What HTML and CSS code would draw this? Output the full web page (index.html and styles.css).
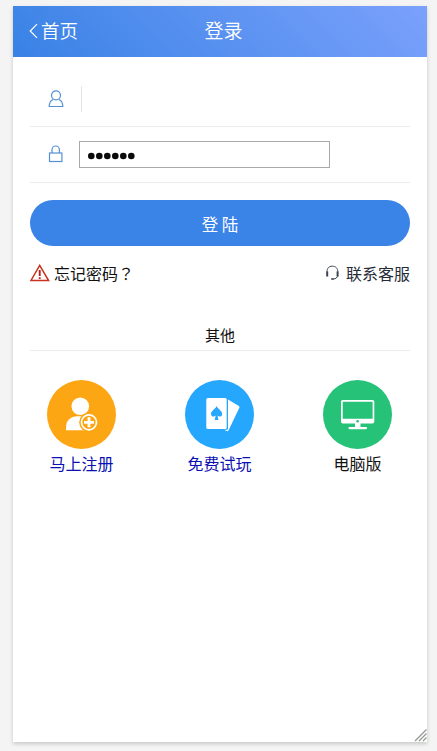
FILE: index.html
```html
<!DOCTYPE html>
<html lang="zh-CN">
<head>
<meta charset="utf-8">
<title>登录</title>
<link rel="stylesheet" href="styles.css">
</head>
<body>
<div class="panel">
  <header class="header">
    <a class="back"><svg width="9" height="16" viewBox="0 0 9 16"><path d="M8 1.2 1.2 8 8 14.8"/></svg>首页</a>
    <h1 class="title">登录</h1>
  </header>
  <form class="form">
    <div class="row">
      <svg class="field-icon" width="16" height="18" viewBox="0 0 16 18"><circle cx="8" cy="5.3" r="4.5"/><path d="M5 9.5C2.5 10.5 1.3 13 1.2 16.5h13.6C14.7 13 13.5 10.5 11 9.5"/></svg>
      <span class="divider"></span>
    </div>
    <div class="row">
      <svg class="field-icon lock" width="16" height="18" viewBox="0 0 16 18"><rect x="1.5" y="8" width="12.4" height="8.5"/><path d="M4 8V5a3.7 4 0 0 1 7.4 0v3"/></svg>
      <div class="password"><svg width="48" height="8" viewBox="0 0 48 8"><circle cx="3.3" cy="4" r="3.3"/><circle cx="11.3" cy="4" r="3.3"/><circle cx="19.3" cy="4" r="3.3"/><circle cx="27.3" cy="4" r="3.3"/><circle cx="35.3" cy="4" r="3.3"/><circle cx="43.3" cy="4" r="3.3"/></svg></div>
    </div>
    <div class="submit">登 陆</div>
  </form>
  <div class="links">
    <a class="forgot"><svg width="20" height="18" viewBox="0 0 20 18"><path d="M9.7 1.4 1 16.5h17.6Z" fill="none" stroke="#c8321e" stroke-width="1.5"/><path d="M9.7 6v6M9.7 13.3v1.7" stroke="#b82018" stroke-width="1.9"/></svg><span>忘记密码<span class="mark" lang="zh-TW">？</span></span></a>
    <a class="service"><svg width="15" height="16" viewBox="0 0 15 16" fill="none" stroke="#3b4351"><path d="M2 7C2 3 4 1.2 7.3 1.2S12.8 3 12.8 7M12.8 10c-.4 2.6-1.7 4-4.8 4"/><path d="M2.2 6.5v5M12.6 6.5v5" stroke-width="2"/><path d="M6.2 14h2.4" stroke-width="1.6"/></svg>联系客服</a>
  </div>
  <h2 class="other">其他</h2>
  <nav class="options">
    <a class="option link">
      <svg width="69" height="69" viewBox="0 0 69 69"><circle cx="34.5" cy="34.5" r="34.5" fill="#fda614"/><circle cx="33.3" cy="26.3" r="8.8" fill="#fff"/><path d="M19 50.2v-3c0-7 5-11 11-11h6l3 14z" fill="#fff"/><circle cx="42" cy="42.3" r="9.8" fill="#fda614"/><circle cx="42" cy="42.3" r="7.5" fill="none" stroke="#fff" stroke-width="1.7"/><path d="M42 37.3v10M37 42.3h10" stroke="#fff" stroke-width="2.8"/></svg>
      <span>马上注册</span>
    </a>
    <a class="option link">
      <svg width="69" height="69" viewBox="0 0 69 69"><circle cx="34.5" cy="34.5" r="34.5" fill="#26a7fe"/><path d="m43 19.5 10.5 6.3c1 .6 1.2 1.4.7 2.3L43.6 50.3c-.5.9-1.2 1-2 .7l-2.3-1.2h2.4c.8 0 1.3-.6 1.3-1.3z" fill="#fff"/><rect x="21.3" y="18" width="20.4" height="31" rx="1.5" fill="#fff"/><path d="M31.6 26c1.4 3.2 5.6 4.8 5.6 8 0 2.8-3.3 3.2-4.7 1.6l1 4.3h-3.8l1-4.3c-1.4 1.6-4.7 1.2-4.7-1.6 0-3.2 4.2-4.8 5.6-8Z" fill="#26a7fe"/></svg>
      <span>免费试玩</span>
    </a>
    <a class="option">
      <svg width="69" height="69" viewBox="0 0 69 69"><circle cx="34.5" cy="34.5" r="34.5" fill="#25c278"/><path fill="#fff" fill-rule="evenodd" d="M19.8 20h29.7a1.8 1.8 0 0 1 1.8 1.8v20a1.8 1.8 0 0 1-1.8 1.8H37.5V47H43a1 1 0 0 1 0 2.2H26.5a1 1 0 0 1 0-2.2H32v-3.4H19.8a1.8 1.8 0 0 1-1.8-1.8v-20a1.8 1.8 0 0 1 1.8-1.8Zm-.1 1.7v17.1h29.9V21.7Z"/><circle cx="34.6" cy="41.2" r="1.3" fill="#25c278"/></svg>
      <span>电脑版</span>
    </a>
  </nav>
  <svg class="grip" width="13" height="14" viewBox="0 0 13 14"><path d="M1 13 12.5 1.5M5 13 12.5 5.5M9 13 12.5 9.5"/></svg>
</div>
</body>
</html>
```

FILE: styles.css
```css
* { box-sizing: border-box; }
body {
  margin: 0;
  padding: 6px 10px 9px 13px;
  height: 751px;
  overflow: hidden;
  background: #f4f4f4;
  font: 16px/24px "Noto Sans CJK SC", sans-serif;
  color: #111;
}
svg { display: block; flex: none; }
.panel {
  position: relative;
  height: 736px;
  background: #fff;
  box-shadow: 0 2px 4px rgba(0, 0, 0, .18);
}
.header {
  height: 51px;
  display: grid;
  grid-template-columns: 1fr auto 1fr;
  align-items: center;
  padding: 0 16px 3px;
  background: linear-gradient(45deg, #3882e5, #7ba1fc);
  color: #fff;
}
.back { display: flex; align-items: center; gap: 3px; font-size: 18.5px; font-weight: 350; }
.back svg { margin-top: 2px; fill: none; stroke: #fff; stroke-width: 1.2; }
.title { margin: 0 0 0 7px; font-size: 19px; font-weight: 350; }
.form { padding: 14px 17px 0; }
.row {
  height: 56px;
  display: flex;
  align-items: center;
  padding-left: 18px;
  border-bottom: 1px solid #ebebeb;
}
.field-icon { fill: none; stroke: #5590d4; stroke-width: 1.2; }
.lock { margin-top: -2px; }
.divider { width: 1px; height: 26px; margin-left: 17px; background: #e5e5e5; }
.password {
  width: 251px;
  height: 27px;
  margin-left: 15px;
  padding: 2px 0 0 7px;
  display: flex;
  align-items: center;
  border: 1px solid #a9a9a9;
}
.password svg { margin-left: 1px; fill: #0b0b0b; }
.submit {
  height: 46px;
  margin-top: 17px;
  border-radius: 23px;
  background: #3a83e7;
  color: #fff;
  text-align: center;
  font-size: 16.5px;
  line-height: 49px;
}
.links {
  display: flex;
  justify-content: space-between;
  padding: 15px 17px 0;
}
.forgot, .service { display: flex; align-items: center; }
.forgot { gap: 4px; }
.mark { font-family: "Noto Sans CJK TC", sans-serif; }
.service { gap: 6px; color: #252b36; }
.other {
  margin: 38px 17px 0;
  height: 28px;
  border-bottom: 1px solid #ebebeb;
  text-align: center;
  font-size: 15px;
  line-height: 23px;
  font-weight: 400;
}
.options { display: grid; grid-template-columns: repeat(3, 138px); margin: 29px 0 0 -1px; }
.option { display: flex; flex-direction: column; align-items: center; gap: 2px; }
.option span { padding-left: 1px; }
.link { color: #0a10b4; }
.grip { position: absolute; right: 0; bottom: 0; fill: none; stroke: #929792; stroke-width: 1.3; }
```
